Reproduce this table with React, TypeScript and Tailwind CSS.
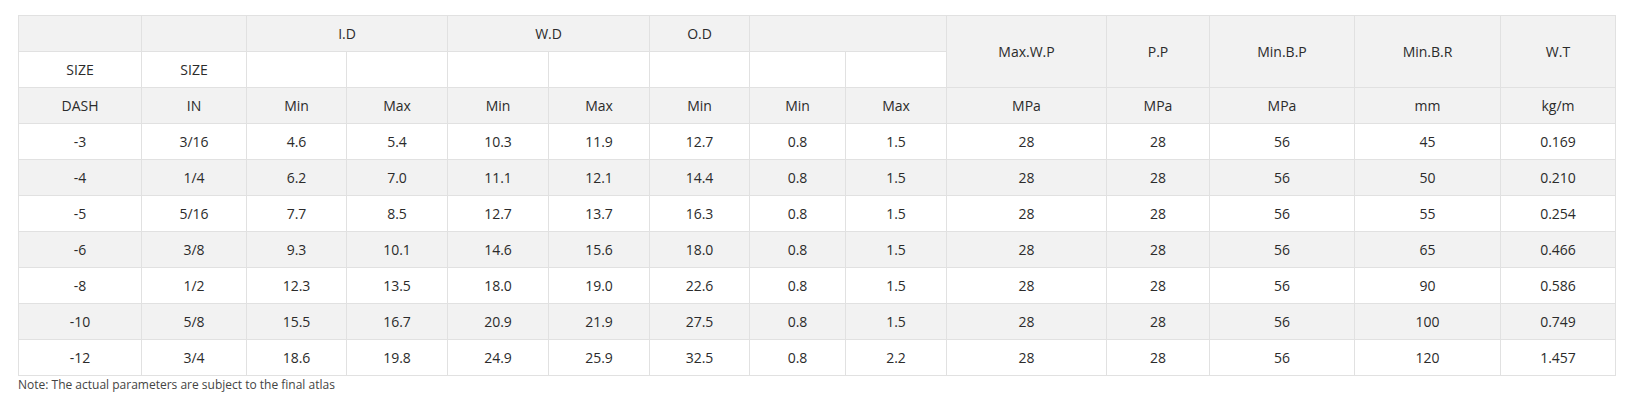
const widths = [123, 105, 100, 101, 101, 101, 100, 96, 101, 160, 103, 145, 146, 115];

const rows = [
  ["-3", "3/16", "4.6", "5.4", "10.3", "11.9", "12.7", "0.8", "1.5", "28", "28", "56", "45", "0.169"],
  ["-4", "1/4", "6.2", "7.0", "11.1", "12.1", "14.4", "0.8", "1.5", "28", "28", "56", "50", "0.210"],
  ["-5", "5/16", "7.7", "8.5", "12.7", "13.7", "16.3", "0.8", "1.5", "28", "28", "56", "55", "0.254"],
  ["-6", "3/8", "9.3", "10.1", "14.6", "15.6", "18.0", "0.8", "1.5", "28", "28", "56", "65", "0.466"],
  ["-8", "1/2", "12.3", "13.5", "18.0", "19.0", "22.6", "0.8", "1.5", "28", "28", "56", "90", "0.586"],
  ["-10", "5/8", "15.5", "16.7", "20.9", "21.9", "27.5", "0.8", "1.5", "28", "28", "56", "100", "0.749"],
  ["-12", "3/4", "18.6", "19.8", "24.9", "25.9", "32.5", "0.8", "2.2", "28", "28", "56", "120", "1.457"],
];

const units = ["DASH", "IN", "Min", "Max", "Min", "Max", "Min", "Min", "Max", "MPa", "MPa", "MPa", "mm", "kg/m"];

const cell = "h-[36px] border border-[#e1e1e1] p-0 text-center align-middle font-normal";

export default function App() {
  return (
    <div className="min-h-[401px] w-[1625px] bg-white pl-[18px] pt-[15px] text-[#2b2b2b] [font-family:'Open_Sans',sans-serif]">
      <table className="w-[1597px] table-fixed border-collapse text-[14px]">
        <colgroup>
          {widths.map((w, i) => (
            <col key={i} style={{ width: w }} />
          ))}
        </colgroup>
        <thead>
          <tr className="bg-[#f2f2f2]">
            <th className={cell}></th>
            <th className={cell}></th>
            <th className={cell} colSpan={2}>I.D</th>
            <th className={cell} colSpan={2}>W.D</th>
            <th className={cell}>O.D</th>
            <th className={cell} colSpan={2}></th>
            <th className={cell} rowSpan={2}>Max.W.P</th>
            <th className={cell} rowSpan={2}>P.P</th>
            <th className={cell} rowSpan={2}>Min.B.P</th>
            <th className={cell} rowSpan={2}>Min.B.R</th>
            <th className={cell} rowSpan={2}>W.T</th>
          </tr>
          <tr>
            <th className={`${cell} bg-white`}>SIZE</th>
            <th className={`${cell} bg-white`}>SIZE</th>
            <th className={`${cell} bg-white`}></th>
            <th className={`${cell} bg-white`}></th>
            <th className={`${cell} bg-white`}></th>
            <th className={`${cell} bg-white`}></th>
            <th className={`${cell} bg-white`}></th>
            <th className={`${cell} bg-white`}></th>
            <th className={`${cell} bg-white`}></th>
          </tr>
          <tr className="bg-[#f2f2f2]">
            {units.map((u, i) => (
              <th key={i} className={cell}>{u}</th>
            ))}
          </tr>
        </thead>
        <tbody>
          {rows.map((r, i) => (
            <tr key={i} className={i % 2 === 1 ? "bg-[#f2f2f2]" : "bg-white"}>
              {r.map((v, j) => (
                <td key={j} className={cell}>{v}</td>
              ))}
            </tr>
          ))}
        </tbody>
      </table>
      <p className="mt-[1px] text-[12px] leading-[16px] text-[#444]">
        Note: The actual parameters are subject to the final atlas
      </p>
    </div>
  );
}
